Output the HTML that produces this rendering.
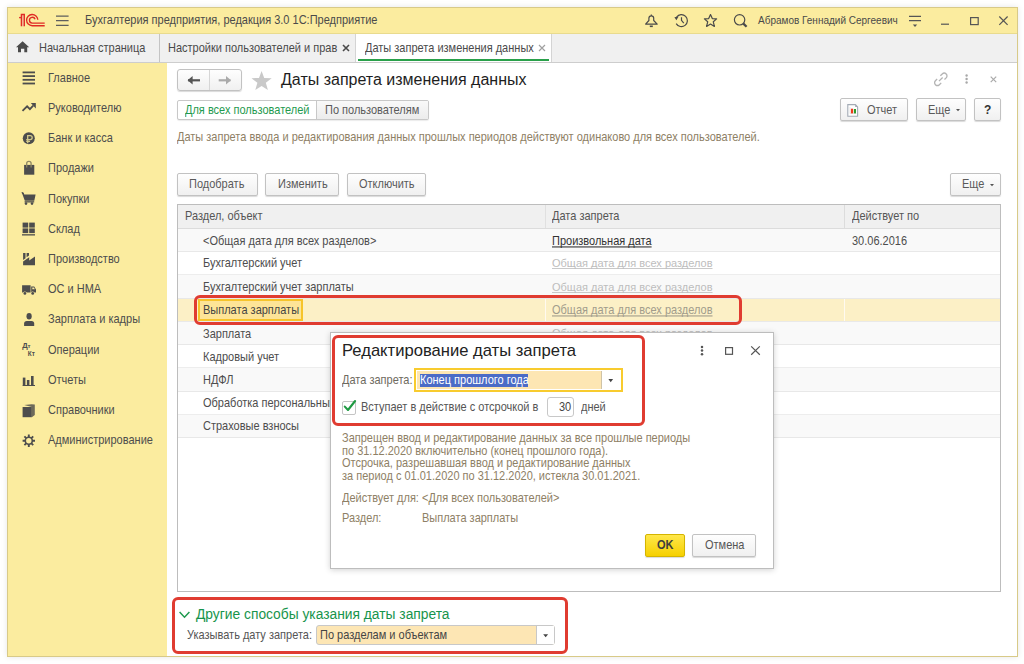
<!DOCTYPE html>
<html><head><meta charset="utf-8">
<style>
*{box-sizing:border-box;margin:0;padding:0}
html,body{width:1024px;height:664px;overflow:hidden;background:#fff}
body{font-family:"Liberation Sans",sans-serif;font-size:11px;line-height:1;color:#4d4d4d;position:relative}
.a{position:absolute;white-space:nowrap;text-decoration-skip-ink:none}
svg.a{overflow:visible}
#win{position:absolute;left:7px;top:7px;width:1011px;height:650px;border:1px solid #d8ca88;background:#fff;box-shadow:0 0 6px rgba(0,0,0,.10)}
#title{position:absolute;left:8px;top:8px;width:1009px;height:26px;background:#fbec9f;border-bottom:1px solid #e9db8e}
#tabs{position:absolute;left:8px;top:34px;width:1009px;height:29px;background:#f0f0f0;border-bottom:1px solid #cdcdcd}
#side{position:absolute;left:8px;top:63px;width:159px;height:593px;background:#fbec9f}
.btn{position:absolute;border:1px solid #c2c2c2;border-radius:2px;background:linear-gradient(#fefefe,#f0f0f0);box-shadow:0 1px 1px rgba(0,0,0,.15);color:#4d4d4d;white-space:nowrap}
.si{position:absolute;left:48px;color:#4d4d4d;white-space:nowrap}
.row{position:absolute;left:178px;width:822px;height:23px;border-bottom:1px solid #e9e9e9}
.cell{position:absolute;white-space:nowrap}
.gl{color:#bdbdbd;text-decoration:underline;text-decoration-color:#c8c8c8}
.t{transform:scaleY(1.08);transform-origin:0 5px}
.redbox{position:absolute;border:3px solid #e03c31;border-radius:5px}
</style></head><body>
<div id="win"></div>
<div id="title"></div>
<div id="tabs"></div>
<div id="side"></div>
<!-- title bar -->
<svg class="a" style="left:16px;top:10px" width="32" height="20" viewBox="0 0 32 20"><g fill="none" stroke="#e02a25" stroke-width="1.35"><path d="M5.4 16.3V4.5H8.3V16.3" fill="#f2c09a"/><path d="M3.1 7.6H5.4"/><path d="M21.8 9.8A5.6 5.6 0 1 0 16.2 15.7H28.7"/><path d="M19.1 9.3A2.9 2.9 0 1 0 16.2 13.1H28.7"/></g></svg>
<svg class="a" style="left:56px;top:15px" width="13" height="12" viewBox="0 0 13 12"><g stroke="#5e5e5e" stroke-width="1.3"><path d="M0 1.2H12.6M0 5.7H12.6M0 10.3H12.6"/></g></svg>
<div class="a t" style="left:85px;top:15px;color:#4a4a4a">Бухгалтерия предприятия, редакция 3.0 1С:Предприятие</div>
<svg class="a" style="left:640px;top:10px" width="120" height="22" viewBox="640 10 120 22"><g fill="none" stroke="#4a4a4a" stroke-width="1.2" stroke-linejoin="round">
<path d="M651.3 14.6V15.8M648.9 18.3C648.9 16.8 649.9 15.8 651.3 15.8C652.7 15.8 653.7 16.8 653.7 18.3V20.5L657.2 24.1H645.6L648.9 20.5Z"/>
<path d="M649.8 26.3H652.8" stroke-width="1.6"/>
<path d="M676.6 17.0A6 6 0 1 1 676.2 23.6"/><path d="M681.5 17.2V20.4L683.8 23.1"/>
<path d="M710.5 14.5L712.3 18.6L716.6 18.9L713.3 21.8L714.4 26.4L710.5 24.0L706.6 26.4L707.7 21.8L704.4 18.9L708.7 18.6Z"/>
<circle cx="739.6" cy="19.8" r="5.2"/><path d="M743.4 23.6L746.6 26.8" stroke-width="2.2"/>
</g><path d="M674.4 17.2L678.6 16.4L676.4 20.2Z" fill="#4a4a4a"/></svg>
<div class="a" style="left:758px;top:16px;font-size:10px;color:#4a4a4a">Абрамов Геннадий Сергеевич</div>
<svg class="a" style="left:900px;top:10px" width="120" height="22" viewBox="900 10 120 22"><g fill="none" stroke="#555" stroke-width="1.2">
<path d="M909 16.4H921M909 20.6H921" stroke-width="1.3"/><path d="M941 24.2H949"/>
<rect x="970.6" y="17.6" width="7.6" height="7"/><path d="M999.3 16.5L1007.6 24.8M1007.6 16.5L999.3 24.8"/></g>
<path d="M912.8 24.6H917.2L915 27.1Z" fill="#555"/></svg>

<!-- tabs -->
<svg class="a" style="left:16px;top:41px" width="14" height="12" viewBox="0 0 14 12"><path d="M6.6 0.3L13.2 6.2H11.2V11.3H8.3V7.8H5V11.3H2V6.2H0Z" fill="#4a4a4a"/></svg>
<div class="a t" style="left:39px;top:43px;color:#4a4a4a">Начальная страница</div>
<div class="a" style="left:159px;top:34px;width:1px;height:28px;background:#c4c4c4"></div>
<div class="a t" style="left:168px;top:43px;color:#4a4a4a">Настройки пользователей и прав</div>
<svg class="a" style="left:342px;top:44px" width="8" height="8" viewBox="0 0 8 8"><path d="M1 1L7 7M7 1L1 7" stroke="#4a4a4a" stroke-width="1.6"/></svg>
<div class="a" style="left:355px;top:34px;width:1px;height:28px;background:#d4d4d4"></div>
<div class="a" style="left:356px;top:34px;width:195px;height:28px;background:#fff"></div>
<div class="a" style="left:551px;top:34px;width:1px;height:28px;background:#d4d4d4"></div>
<div class="a t" style="left:365px;top:43px;color:#4a4a4a">Даты запрета изменения данных</div>
<svg class="a" style="left:538px;top:44px" width="8" height="8" viewBox="0 0 8 8"><path d="M1 1L7 7M7 1L1 7" stroke="#a0a0a0" stroke-width="1.2"/></svg>
<div class="a" style="left:358px;top:59px;width:191px;height:2px;background:#29a04a"></div>
<!-- sidebar -->
<div class="si t" style="top:73px">Главное</div>
<div class="si t" style="top:103px">Руководителю</div>
<div class="si t" style="top:133px">Банк и касса</div>
<div class="si t" style="top:163px">Продажи</div>
<div class="si t" style="top:194px">Покупки</div>
<div class="si t" style="top:224px">Склад</div>
<div class="si t" style="top:254px">Производство</div>
<div class="si t" style="top:284px">ОС и НМА</div>
<div class="si t" style="top:314px">Зарплата и кадры</div>
<div class="si t" style="top:345px">Операции</div>
<div class="si t" style="top:375px">Отчеты</div>
<div class="si t" style="top:405px">Справочники</div>
<div class="si t" style="top:435px">Администрирование</div>
<svg class="a" style="left:16px;top:66px" width="30" height="390" viewBox="16 66 30 390"><g fill="#4d4d4d">
<rect x="22.6" y="71.5" width="12.4" height="1.8"/><rect x="22.6" y="75.2" width="12.4" height="1.8"/><rect x="22.6" y="78.9" width="12.4" height="1.8"/><rect x="22.6" y="82.6" width="12.4" height="1.8"/>
<path d="M22.5 110.8L27.1 106.3L29.9 109.1L33.2 105.6" fill="none" stroke="#4d4d4d" stroke-width="1.8"/><path d="M30.8 103H35.8V108.4Z"/>
<circle cx="28.8" cy="138.3" r="6"/>
<path d="M169 0" />
<path d="M24.1 164.9H34.3V174.7H24.1Z"/><path d="M26.7 167.6V163.4Q26.7 161.4 28.9 161.4Q31.1 161.4 31.1 163.4V167.6" fill="none" stroke="#8e8763" stroke-width="1.3"/>
<path d="M21.8 192.4H23.4L24.3 194.6H35.6L34.3 200.8H24.8Z"/><path d="M21.8 192.4L23.6 194.2" stroke="#4d4d4d" stroke-width="1.2"/><rect x="24.6" y="201.2" width="9.6" height="1.3"/><circle cx="26" cy="203.6" r="1.3"/><circle cx="32" cy="203.6" r="1.3"/>
<rect x="22.6" y="222.6" width="5.6" height="5"/><rect x="29.2" y="222.6" width="5.6" height="5"/><rect x="22.6" y="228.4" width="5.6" height="4.7"/><rect x="29.2" y="228.4" width="5.6" height="4.7"/><rect x="22" y="234.2" width="13" height="1.3"/>
<path d="M23.1 265.3V261.4L29.2 257.2V260.4L35 256.6V265.3Z"/><path d="M23.1 253.1H25.5V258.2L23.1 259.9Z M26.6 253.1H29V255.5L26.6 257.2Z"/>
<path d="M22.1 285.2H30.6V292.6H22.1Z M31.2 286.5H34.2L36 289.6V292.6H31.2Z"/><path d="M32.3 287.4H33.8L34.9 289.3H32.3Z" fill="#fbec9f"/><circle cx="24.9" cy="293.4" r="1.9" fill="#fbec9f"/><circle cx="32.7" cy="293.4" r="1.9" fill="#fbec9f"/><circle cx="24.9" cy="293.4" r="1.4"/><circle cx="32.7" cy="293.4" r="1.4"/>
<path d="M24.1 326V323.6Q24.1 320.9 26.8 320.9H31.5Q34.2 320.9 34.2 323.6V326Z"/><ellipse cx="29.1" cy="316.3" rx="2.6" ry="3.3"/>
<rect x="22.6" y="385" width="12.4" height="1"/><rect x="22.8" y="377.6" width="2.6" height="7.6"/><rect x="26.9" y="380" width="2.5" height="5.2"/><rect x="31" y="376" width="2.6" height="9.2"/>
<path d="M24.2 405L31.6 404.3L34.8 404.4V415L31.8 417.3V407Z" fill="#6d6a5a"/><rect x="22.6" y="407" width="9.2" height="10.2"/>
</g>
<path d="M27.7 143.2V135.6H30.2A2 2 0 0 1 30.2 139.6H26.2M26.2 141.4H30" fill="none" stroke="#d4ca8a" stroke-width="1.3"/>
<text x="22.2" y="348.3" fill="#4d4d4d" font-size="7.6" font-weight="bold" font-family="Liberation Sans">Д<tspan font-size="6.2">т</tspan></text>
<text x="27.8" y="356" fill="#4d4d4d" font-size="6.4" font-weight="bold" font-family="Liberation Sans">Кт</text>
<g transform="translate(28.8 440.7)"><g stroke="#4d4d4d" stroke-width="1.9"><path d="M0 -6.2V6.2M-6.2 0H6.2M-4.4 -4.4L4.4 4.4M4.4 -4.4L-4.4 4.4"/></g><circle r="4.3" fill="#4d4d4d"/><circle r="2.7" fill="#fbec9f"/></g>
</svg>
<!-- content header -->
<div class="btn" style="left:177px;top:69px;width:65px;height:22px;border-radius:3px"></div>
<div class="a" style="left:209px;top:70px;width:1px;height:20px;background:#d6d6d6"></div>
<svg class="a" style="left:186px;top:74px" width="50" height="12" viewBox="186 74 50 12"><path d="M188 80.3H200" stroke="#555" stroke-width="2.2"/><path d="M187.6 80.3L192.6 76V84.6Z" fill="#555"/>
<path d="M218.7 80.3H230.5" stroke="#aaa" stroke-width="2.2"/><path d="M231 80.3L226 76V84.6Z" fill="#aaa"/></svg>
<svg class="a" style="left:250px;top:70px" width="23" height="21" viewBox="0 0 23 21"><path d="M11.6 1L14.2 7.9L21.7 8.2L15.8 12.8L17.9 20L11.6 15.9L5.3 20L7.4 12.8L1.5 8.2L9 7.9Z" fill="#c9c9c9"/></svg>
<div class="a" style="left:281px;top:72px;font-size:16px;color:#1e1e1e">Даты запрета изменения данных</div>
<svg class="a" style="left:930px;top:70px" width="72" height="20" viewBox="930 70 72 20"><g fill="none" stroke="#b4b4b4" stroke-width="1.3"><g transform="translate(940.8 79.3) rotate(-45)"><path d="M2.2 -2.8H4.8A2.8 2.8 0 0 1 4.8 2.8H2.4M-2.2 2.8H-4.8A2.8 2.8 0 0 1 -4.8 -2.8H-2.4M-2.6 0H2.6"/></g><path d="M990.7 76.7L996.2 82.2M996.2 76.7L990.7 82.2" stroke="#aaa" stroke-width="1.2"/></g>
<circle cx="966.6" cy="75.5" r="1.2" fill="#a8a8a8"/><circle cx="966.6" cy="79" r="1.2" fill="#a8a8a8"/><circle cx="966.6" cy="82.5" r="1.2" fill="#a8a8a8"/></svg>

<div class="a" style="left:177px;top:100px;width:252px;height:20px;border:1px solid #c8c8c8;border-radius:2px;background:#fff;box-shadow:0 1px 1px rgba(0,0,0,.08)"></div>
<div class="a" style="left:316px;top:101px;width:112px;height:18px;background:linear-gradient(#f9f9f9,#ececec);border-left:1px solid #c8c8c8"></div>
<div class="a t" style="left:185px;top:105px;color:#1f9a4f">Для всех пользователей</div>
<div class="a t" style="left:325px;top:105px;color:#5a5a5a">По пользователям</div>

<div class="btn" style="left:840px;top:98px;width:68px;height:23px"></div>
<svg class="a" style="left:846px;top:103px" width="14" height="15" viewBox="0 0 14 15"><path d="M1.8 1.6H9.4L11.6 3.9V13.3H1.8Z" fill="#fff" stroke="#a3abb5" stroke-width="1.1"/><path d="M9.2 1.6L11.6 3.9H9.2Z" fill="#a3abb5"/><path d="M4 4V10.6H10.5" fill="none" stroke="#d9d9d9" stroke-width="0.6"/><rect x="4.9" y="5.7" width="2.2" height="4.7" fill="#ee3a1c"/><rect x="7.9" y="6" width="2.1" height="4.4" fill="#2c9a2a"/></svg>
<div class="a t" style="left:867px;top:105px;color:#5a5a5a">Отчет</div>
<div class="btn" style="left:916px;top:98px;width:50px;height:23px"></div>
<div class="a t" style="left:928px;top:105px;color:#5a5a5a">Еще</div>
<svg class="a" style="left:955px;top:108px" width="6" height="4" viewBox="0 0 6 4"><path d="M1 1H5L3 3.2Z" fill="#555"/></svg>
<div class="btn" style="left:974px;top:98px;width:27px;height:23px"></div>
<div class="a t" style="left:984px;top:104px;font-size:12px;font-weight:bold;color:#333">?</div>

<div class="a t" style="left:177px;top:132px;color:#8e8065">Даты запрета ввода и редактирования данных прошлых периодов действуют одинаково для всех пользователей.</div>

<div class="btn" style="left:177px;top:173px;width:81px;height:23px"></div>
<div class="a t" style="left:189px;top:179px;color:#5a5a5a">Подобрать</div>
<div class="btn" style="left:265px;top:173px;width:74px;height:23px"></div>
<div class="a t" style="left:278px;top:179px;color:#5a5a5a">Изменить</div>
<div class="btn" style="left:347px;top:173px;width:79px;height:23px"></div>
<div class="a t" style="left:359px;top:179px;color:#5a5a5a">Отключить</div>
<div class="btn" style="left:950px;top:173px;width:51px;height:23px"></div>
<div class="a t" style="left:962px;top:179px;color:#5a5a5a">Еще</div>
<svg class="a" style="left:989px;top:183px" width="6" height="4" viewBox="0 0 6 4"><path d="M1 1H5L3 3.2Z" fill="#555"/></svg>
<!-- table -->
<div class="a" style="left:177px;top:204px;width:824px;height:388px;border:1px solid #bdbdbd;background:#fff"></div>
<div class="a" style="left:178px;top:205px;width:822px;height:24px;background:#f0f0f0;border-bottom:1px solid #dcdcdc"></div>
<div class="a" style="left:545px;top:205px;width:1px;height:23px;background:#e0e0e0"></div>
<div class="a" style="left:844px;top:205px;width:1px;height:23px;background:#dcdcdc"></div>
<div class="a t" style="left:185px;top:211px;color:#555">Раздел, объект</div>
<div class="a t" style="left:552px;top:211px;color:#555">Дата запрета</div>
<div class="a t" style="left:852px;top:211px;color:#555">Действует по</div>

<div class="a" style="left:178px;top:229px;width:822px;height:23px;background:#f9f9f9;border-bottom:1px solid #e8e8e8"></div>
<div class="a" style="left:178px;top:252px;width:822px;height:23px;background:#fff;border-bottom:1px solid #ededed"></div>
<div class="a" style="left:178px;top:275px;width:822px;height:24px;background:#f9f9f9;border-bottom:1px solid #e8e8e8"></div>
<div class="a" style="left:178px;top:299px;width:822px;height:23px;background:#fcf0c6;border-bottom:1px solid #e9e9e9"></div>
<div class="a" style="left:844px;top:299px;width:1px;height:22px;background:#fffaf0"></div>
<div class="a" style="left:545px;top:299px;width:1px;height:22px;background:#fffaf0"></div>
<div class="a" style="left:178px;top:322px;width:822px;height:23px;background:#f9f9f9;border-bottom:1px solid #e8e8e8"></div>
<div class="a" style="left:178px;top:345px;width:822px;height:23px;background:#fff;border-bottom:1px solid #ededed"></div>
<div class="a" style="left:178px;top:368px;width:822px;height:24px;background:#f9f9f9;border-bottom:1px solid #e8e8e8"></div>
<div class="a" style="left:178px;top:392px;width:822px;height:23px;background:#fff;border-bottom:1px solid #ededed"></div>
<div class="a" style="left:178px;top:415px;width:822px;height:23px;background:#f9f9f9;border-bottom:1px solid #e8e8e8"></div>

<div class="a t" style="left:203px;top:236px;color:#4d4d4d">&lt;Общая дата для всех разделов&gt;</div>
<div class="a t" style="left:552px;top:236px;color:#333;text-decoration:underline">Произвольная дата</div>
<div class="a t" style="left:852px;top:236px;color:#4d4d4d">30.06.2016</div>
<div class="a t" style="left:203px;top:258px;color:#4d4d4d">Бухгалтерский учет</div>
<div class="a gl" style="left:552px;top:258px">Общая дата для всех разделов</div>
<div class="a t" style="left:203px;top:282px;color:#4d4d4d">Бухгалтерский учет зарплаты</div>
<div class="a gl" style="left:552px;top:282px">Общая дата для всех разделов</div>
<div class="a" style="left:198px;top:299px;width:105px;height:22px;border:2px solid #f6c42b;background:#fde497"></div>
<div class="a t" style="left:203px;top:305px;color:#444">Выплата зарплаты</div>
<div class="a t" style="left:552px;top:305px;color:#a19c8c;text-decoration:underline">Общая дата для всех разделов</div>
<div class="a t" style="left:203px;top:329px;color:#4d4d4d">Зарплата</div>
<div class="a gl" style="left:552px;top:328px">Общая дата для всех разделов</div>
<div class="a t" style="left:203px;top:352px;color:#4d4d4d">Кадровый учет</div>
<div class="a t" style="left:203px;top:375px;color:#4d4d4d">НДФЛ</div>
<div class="a t" style="left:203px;top:398px;color:#4d4d4d">Обработка персональных данных</div>
<div class="a t" style="left:203px;top:421px;color:#4d4d4d">Страховые взносы</div>

<div class="redbox" style="left:194px;top:295px;width:548px;height:30px;border-width:3.5px;border-radius:6px"></div>

<!-- dialog -->
<div class="a" style="left:330px;top:332px;width:444px;height:237px;border:1px solid #bdbdbd;background:#fff;box-shadow:0 1px 6px rgba(0,0,0,.18)"></div>
<div class="a" style="left:342px;top:343px;font-size:16.6px;color:#222">Редактирование даты запрета</div>
<svg class="a" style="left:695px;top:340px" width="70" height="20" viewBox="695 340 70 20"><g fill="#555"><circle cx="702" cy="347" r="1.25"/><circle cx="702" cy="350.6" r="1.25"/><circle cx="702" cy="354.2" r="1.25"/></g><g fill="none" stroke="#555" stroke-width="1.2"><rect x="725.6" y="347.6" width="6.9" height="6.7"/><path d="M751.2 346.4L759.8 354.8M759.8 346.4L751.2 354.8"/></g></svg>
<div class="a t" style="left:342px;top:375px;color:#6e6a60">Дата запрета:</div>
<div class="a" style="left:414px;top:368px;width:209px;height:24px;border:2px solid #f8cb2e;background:#fff"></div>
<div class="a" style="left:417px;top:371px;width:185px;height:18px;background:#fde6b3;border-right:1px solid #cfc3a6"></div>
<svg class="a" style="left:606px;top:377px" width="9" height="7" viewBox="0 0 9 7"><path d="M2.4 2.1H7.1L4.75 5.2Z" fill="#444"/></svg>
<div class="a" style="left:420px;top:374px;width:108px;height:13px;background:#4b6bc6"></div>
<div class="a t" style="left:420px;top:375px;color:#fff">Конец прошлого года</div>
<div class="a" style="left:342px;top:401px;width:14px;height:14px;border:1px solid #c4c4c4;border-radius:2px;background:#fff"></div>
<svg class="a" style="left:342px;top:398px" width="16" height="16" viewBox="0 0 16 16"><path d="M2.8 8.6L6 12L13.1 3" fill="none" stroke="#1f9a43" stroke-width="2.1" stroke-linecap="round" stroke-linejoin="round"/></svg>
<div class="a t" style="left:361px;top:402px;color:#555">Вступает в действие с отсрочкой в</div>
<div class="a" style="left:547px;top:397px;width:27px;height:20px;border:1px solid #c8c8c8;border-radius:3px;background:#fff"></div>
<div class="a t" style="left:559px;top:402px;color:#444">30</div>
<div class="a t" style="left:581px;top:402px;color:#555">дней</div>

<div class="a t" style="left:342px;top:433px;color:#8e8065">Запрещен ввод и редактирование данных за все прошлые периоды</div>
<div class="a t" style="left:342px;top:446px;color:#8e8065">по 31.12.2020 включительно (конец прошлого года).</div>
<div class="a t" style="left:342px;top:458px;color:#8e8065">Отсрочка, разрешавшая ввод и редактирование данных</div>
<div class="a t" style="left:342px;top:471px;color:#8e8065">за период с 01.01.2020 по 31.12.2020, истекла 30.01.2021.</div>
<div class="a t" style="left:342px;top:493px;color:#8e8065">Действует для:</div>
<div class="a t" style="left:422px;top:493px;color:#8e8065">&lt;Для всех пользователей&gt;</div>
<div class="a t" style="left:342px;top:513px;color:#8e8065">Раздел:</div>
<div class="a t" style="left:422px;top:513px;color:#8e8065">Выплата зарплаты</div>

<div class="a" style="left:645px;top:534px;width:40px;height:23px;border:1px solid #d4b400;border-radius:2px;background:linear-gradient(#ffe74a,#f6d000);box-shadow:0 1px 1px rgba(0,0,0,.15)"></div>
<div class="a t" style="left:657px;top:540px;font-weight:bold;color:#3d3d3d">OK</div>
<div class="btn" style="left:692px;top:534px;width:64px;height:23px"></div>
<div class="a t" style="left:705px;top:540px;color:#555">Отмена</div>

<div class="redbox" style="left:332px;top:335px;width:313px;height:91px;border-width:3.5px;border-radius:6px"></div>

<!-- bottom group -->
<svg class="a" style="left:178px;top:609px" width="14" height="12" viewBox="0 0 14 12"><path d="M1.6 3.1L6.5 8.2L11.4 3.1" fill="none" stroke="#1f9a4f" stroke-width="1.5"/></svg>
<div class="a" style="left:196px;top:608px;font-size:13.8px;color:#17944b">Другие способы указания даты запрета</div>
<div class="a t" style="left:187px;top:630px;color:#555">Указывать дату запрета:</div>
<div class="a" style="left:316px;top:625px;width:239px;height:20px;border:1px solid #c8c8c8;border-radius:3px;background:#fde6b4"></div>
<div class="a" style="left:536px;top:626px;width:18px;height:18px;background:#fff;border-left:1px solid #c8c8c8"></div>
<svg class="a" style="left:542px;top:633px" width="7" height="5" viewBox="0 0 7 5"><path d="M1.2 1.3H6.1L3.65 4.3Z" fill="#444"/></svg>
<div class="a t" style="left:320px;top:630px;color:#444">По разделам и объектам</div>
<div class="redbox" style="left:172px;top:597px;width:396px;height:57px;border-width:3.5px;border-radius:6px"></div>
</body></html>
